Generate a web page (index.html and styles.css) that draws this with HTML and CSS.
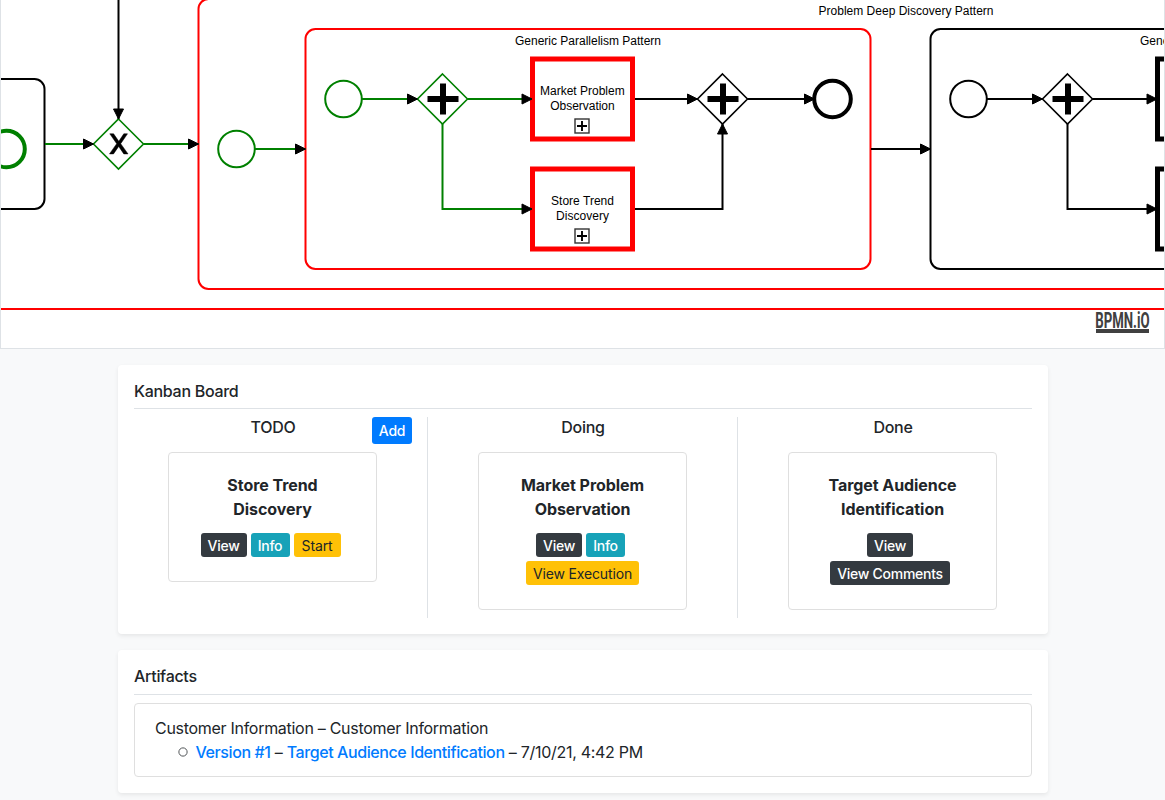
FILE: index.html
```html
<!DOCTYPE html>
<html lang="en">
<head>
<meta charset="utf-8">
<title>Kanban Board</title>
<link rel="stylesheet" href="styles.css">
</head>
<body>
<section class="diagram">
<svg class="diagram-canvas" viewBox="1 0 1163 348" width="1163" height="348">
  <defs>
    <marker id="arrow" viewBox="0 0 20 20" refX="11" refY="10" markerWidth="20" markerHeight="20" markerUnits="userSpaceOnUse" orient="auto"><path d="M1 5 L11 10 L1 15 Z" fill="#000" stroke="#000" stroke-width="1"/></marker>
    <g id="plus"><path d="M-15.5 0H15.5M0-15.5V15.5" class="plus"/></g>
    <g id="expand"><rect x="-7" y="-7" width="14" height="14" class="expand-box"/><path d="M-5 0H5M0-5V5" class="expand-plus"/></g>
  </defs>
  <path class="shape red" d="M0 309H1166"/>
  <rect class="shape" x="-100" y="79" width="144.5" height="130" rx="10"/>
  <rect class="shape red" x="198.5" y="-1" width="1100" height="290" rx="10"/>
  <rect class="shape red" x="305.5" y="29" width="565" height="240" rx="10"/>
  <rect class="shape" x="930.5" y="29" width="565" height="240" rx="10"/>

  <circle class="shape end green" cx="6.5" cy="149" r="18.3"/>
  <path class="shape green gate" d="M118.5 119L143.5 144L118.5 169L93.5 144Z"/>
  <path d="M109.8 133.8H113.6L118.8 141.3L123.8 133.8H127.5L120.7 143.7L128 153.9H123.8L118.7 146.4L113.5 153.9H109.5L116.7 143.7Z" class="cross"/>
  <circle class="shape green" cx="236.5" cy="149" r="18.3"/>
  <circle class="shape green" cx="343.5" cy="99" r="18.3"/>
  <path class="shape green gate" d="M442.5 74L467.5 99L442.5 124L417.5 99Z"/>
  <use href="#plus" x="443" y="99"/>
  <path class="shape gate" d="M722.5 74L747.5 99L722.5 124L697.5 99Z"/>
  <use href="#plus" x="723" y="99"/>
  <circle class="shape end" cx="832.5" cy="99" r="18.3"/>
  <circle class="shape" cx="968.5" cy="99" r="18.3"/>
  <path class="shape gate" d="M1067.5 74L1092.5 99L1067.5 124L1042.5 99Z"/>
  <use href="#plus" x="1068" y="99"/>
  <rect class="shape task red" x="532.5" y="59" width="100" height="80"/>
  <rect class="shape task red" x="532.5" y="169" width="100" height="80"/>
  <use href="#expand" x="582" y="126"/>
  <use href="#expand" x="582" y="236"/>
  <rect class="shape task" x="1157.5" y="59" width="100" height="80"/>
  <rect class="shape task" x="1157.5" y="169" width="100" height="80"/>

  <g class="flows">
    <path d="M118.5 -5V119"/>
    <path class="green" d="M45 144H93.5"/>
    <path class="green" d="M143.5 144H198.5"/>
    <path class="green" d="M255 149H305.5"/>
    <path class="green" d="M362 99H417.5"/>
    <path class="green" d="M467.5 99H532"/>
    <path class="green" d="M442.5 124V209H532"/>
    <path d="M635 99H697.5"/>
    <path d="M635 209H722.5V124"/>
    <path d="M747.5 99H814.5"/>
    <path d="M871 149H930.5"/>
    <path d="M987 99H1042.5"/>
    <path d="M1092.5 99H1157"/>
    <path d="M1067.5 124V209H1157"/>
  </g>

  <g class="labels">
    <text x="818.5" y="15" textLength="175">Problem Deep Discovery Pattern</text>
    <text x="515" y="45" textLength="146">Generic Parallelism Pattern</text>
    <text x="1140" y="45" textLength="146">Generic Parallelism Pattern</text>
    <text x="540" y="95" textLength="84.7">Market Problem</text>
    <text x="550.2" y="110" textLength="64.5">Observation</text>
    <text x="551" y="205" textLength="63">Store Trend</text>
    <text x="556" y="220" textLength="53">Discovery</text>
  </g>
  <text class="logo" transform="translate(1095.2 327.6) scale(.61 1)" textLength="89" lengthAdjust="spacingAndGlyphs">BPMN.iO</text>
  <rect class="logo-bar" x="1096" y="329" width="53" height="4"/>
</svg>
</section>

<main class="content">
  <section class="panel">
    <h2 class="panel-title">Kanban Board</h2>
    <div class="board">
      <div class="column">
        <div class="column-head"><span class="column-name">TODO</span><button class="btn add">Add</button></div>
        <article class="card">
          <h3 class="card-title">Store Trend<br>Discovery</h3>
          <div class="actions"><button class="btn dark view">View</button><button class="btn info">Info</button><button class="btn warn start">Start</button></div>
        </article>
      </div>
      <div class="column">
        <div class="column-head"><span class="column-name">Doing</span></div>
        <article class="card">
          <h3 class="card-title">Market Problem<br>Observation</h3>
          <div class="actions"><button class="btn dark view">View</button><button class="btn info">Info</button><button class="btn warn execution">View Execution</button></div>
        </article>
      </div>
      <div class="column">
        <div class="column-head"><span class="column-name">Done</span></div>
        <article class="card">
          <h3 class="card-title">Target Audience<br>Identification</h3>
          <div class="actions review"><button class="btn dark view">View</button><button class="btn dark comments">View Comments</button></div>
        </article>
      </div>
    </div>
  </section>

  <section class="panel artifacts">
    <h2 class="panel-title">Artifacts</h2>
    <div class="artifact">
      <div class="artifact-name">Customer Information – Customer Information</div>
      <ul class="versions"><li><a href="#">Version #1</a> – <a href="#">Target Audience Identification</a> – 7/10/21, 4:42 PM</li></ul>
    </div>
  </section>
</main>
</body>
</html>
```
FILE: styles.css
```css
* { box-sizing: border-box; }
body {
  margin: 0;
  height: 800px;
  overflow: hidden;
  background: #f8f9fa;
  color: #212529;
  font: 16px/24px Inter, "Liberation Sans", sans-serif;
  letter-spacing: -.29px;
}
a { color: #007bff; text-decoration: none; font-weight: 500; letter-spacing: -.41px; }

.diagram {
  height: 349px;
  background: #fff;
  border: 1px solid #dee2e6;
  border-top: 0;
}
.diagram-canvas { display: block; }
.shape { fill: #fff; stroke: #000; stroke-width: 2; }
path.shape.red { fill: none; }
.gate { stroke-width: 1.6; }
.end { stroke-width: 4; }
.task { stroke-width: 5; }
.red { stroke: #f00; }
.plus { stroke: #000; stroke-width: 6; }
.cross { stroke: #000; stroke-width: .5; }
.expand-box { fill: #fff; stroke: #333; stroke-width: 1.4; }
.expand-plus { stroke: #000; stroke-width: 1.9; }
.flows path { fill: none; stroke: #000; stroke-width: 2; marker-end: url(#arrow); }
.shape.green, .flows .green { stroke: #008000; }
.labels { font: 12px "Liberation Sans", Arial, sans-serif; letter-spacing: 0; }
.logo { font: 700 21.5px Roboto, sans-serif; letter-spacing: 0; fill: #404040; }
.logo-bar { fill: #404040; }

.content { width: 930px; margin: 16px auto 0 118px; }
.panel {
  height: 269px;
  padding: 16px;
  background: #fff;
  border-radius: 4px;
  box-shadow: 0 2px 4px rgba(0, 0, 0, .075);
}
.panel-title {
  height: 28px;
  margin: 0 0 8px;
  border-bottom: 1px solid #dee2e6;
  font-size: 16px;
  font-weight: 500;
  line-height: 20px;
}
.board { display: grid; grid-template-columns: repeat(3, 310px); margin: 0 -16px; height: 201px; }
.column { padding: 0 16px; box-shadow: inset -1px 0 #dee2e6; }
.column:last-child { box-shadow: none; }
.column-head { display: grid; grid-template-columns: 1fr auto 1fr; height: 35px; align-items: start; }
.column-name { grid-column: 2; font-weight: 500; line-height: 20px; }
.card {
  width: 209px;
  margin: 0 auto 0 34px;
  padding: 20px;
  border: 1px solid #dfdfdf;
  border-radius: 4px;
  text-align: center;
}
.card-title { margin: 0 0 12px; font-size: 16px; font-weight: 700; line-height: 24px; letter-spacing: -.06px; }
.actions { display: flex; flex-wrap: wrap; justify-content: center; }
.review { padding-right: 1px; }
.btn {
  height: 24px;
  margin: 0 4px 4px 0;
  padding: 2px 0 0;
  border: 0;
  border-radius: 3px;
  color: #fff;
  font: 500 14px/22px Inter, sans-serif;
  letter-spacing: -.28px;
  white-space: nowrap;
}
.add { grid-column: 3; justify-self: end; width: 40px; height: 27px; margin: 0; padding: 1px 0 0; background: #007bff; }
.dark { background: #343a40; }
.info { width: 39px; background: #17a2b8; }
.warn { background: #ffc107; color: #212529; font-weight: 400; letter-spacing: -.15px; }
.view { width: 46px; }
.start { width: 47px; }
.execution { width: 113px; margin-right: 0; }
.comments { width: 120px; }

.artifacts { height: 143px; margin-top: 16px; }
.artifacts .panel-title { height: 29px; }
.artifact { height: 74px; padding: 12px 20px; border: 1px solid #dfdfdf; border-radius: 4px; }
.versions { margin: 0; padding-left: 24px; list-style: none; }
.versions li { display: flow-root; }
.versions li::before {
  content: "";
  display: inline-block;
  width: 8px;
  height: 8px;
  margin: 0 7.5px 1px 0;
  border: 1px solid #43474a;
  border-radius: 50%;
  transform: scale(.92);
}
.versions li { margin-left: -1px; }
```
